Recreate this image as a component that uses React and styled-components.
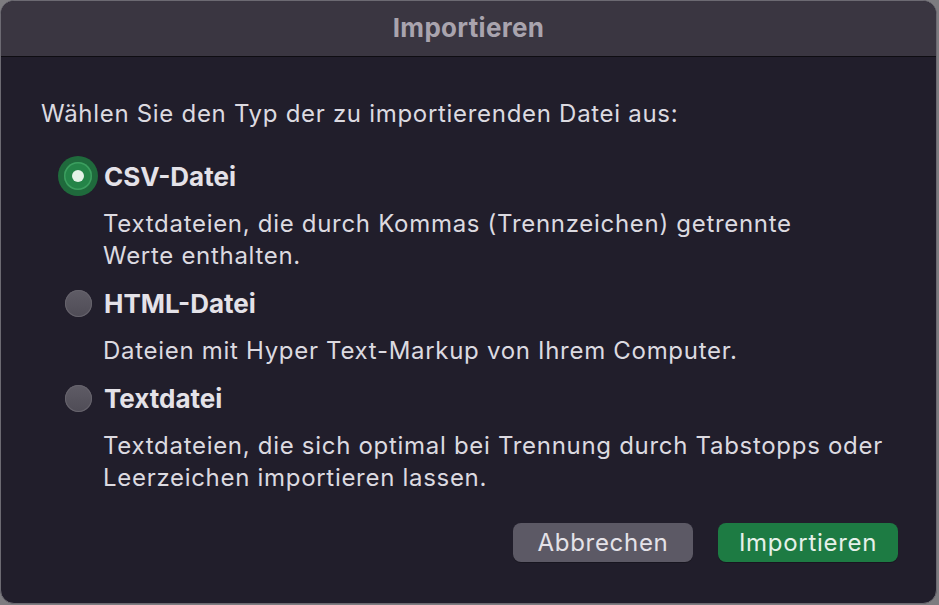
import React, { useState } from "react";
import styled, { createGlobalStyle } from "styled-components";

const GlobalStyle = createGlobalStyle`
  html, body {
    margin: 0;
    padding: 0;
    background: #7d7c80;
  }
  * {
    box-sizing: border-box;
  }
`;

const Window = styled.div`
  width: 937px;
  height: 604px;
  display: flex;
  flex-direction: column;
  background: #211e2b;
  border: 1px solid #6c6a72;
  border-radius: 14px;
  overflow: hidden;
  font-family: Inter, "Liberation Sans", sans-serif;
  color: #dcdae0;
`;

const TitleBar = styled.div`
  height: 56px;
  flex: none;
  display: flex;
  align-items: center;
  justify-content: center;
  padding-bottom: 3px;
  background: #3a3641;
  border-bottom: 1px solid #0e0d12;
  font-size: 26px;
  font-weight: 700;
  letter-spacing: 0.3px;
  color: #a9a4ae;
`;

const Body = styled.div`
  flex: 1;
  display: flex;
  flex-direction: column;
  padding: 41px 38px 0 40px;
`;

const Prompt = styled.div`
  font-size: 24px;
  letter-spacing: 0.7px;
  line-height: 32px;
  margin-bottom: 26px;
`;

const Option = styled.label`
  display: flex;
  align-items: center;
  height: 40px;
  gap: 6px;
  padding-left: 17px;
  cursor: pointer;
`;

const RadioOuter = styled.span`
  width: 40px;
  height: 40px;
  flex: none;
  display: flex;
  align-items: center;
  justify-content: center;
  border-radius: 50%;
  background: ${(p) => (p.checked ? "#1f6a3c" : "transparent")};
`;

const RadioDot = styled.span`
  width: ${(p) => (p.checked ? 28 : 27)}px;
  height: ${(p) => (p.checked ? 28 : 27)}px;
  display: flex;
  align-items: center;
  justify-content: center;
  border-radius: 50%;
  background: ${(p) =>
    p.checked
      ? "#248448"
      : "linear-gradient(#5f5c66, #4f4c56)"};
  box-shadow: ${(p) =>
    p.checked ? "inset 0 0 0 1.5px #3c9e5f" : "inset 0 0 0 1px #66636c"};

  &::after {
    content: "";
    display: ${(p) => (p.checked ? "block" : "none")};
    width: 12px;
    height: 12px;
    border-radius: 50%;
    background: #e4f2e8;
  }
`;

const OptionTitle = styled.span`
  font-size: 26px;
  font-weight: 700;
  color: #e4e2e8;
`;

const Description = styled.div`
  font-size: 24px;
  letter-spacing: 0.7px;
  line-height: 32px;
  padding-left: 62px;
  margin: 12px 0 11px;
`;

const Footer = styled.div`
  display: flex;
  justify-content: flex-end;
  gap: 25px;
  margin-top: 18px;
`;

const Button = styled.button`
  width: 180px;
  height: 39px;
  padding: 0;
  border: none;
  border-radius: 8px;
  font-family: inherit;
  font-size: 24px;
  letter-spacing: 0.7px;
  color: ${(p) => (p.primary ? "#e6f1ea" : "#e4e2e8")};
  background: ${(p) => (p.primary ? "#1d7b43" : "#5c5965")};
  box-shadow: 0 1px 0 rgba(0, 0, 0, 0.25);
  cursor: pointer;
`;

const options = [
  {
    id: "csv",
    title: "CSV-Datei",
    desc: ["Textdateien, die durch Kommas (Trennzeichen) getrennte", "Werte enthalten."],
  },
  {
    id: "html",
    title: "HTML-Datei",
    desc: ["Dateien mit Hyper Text-Markup von Ihrem Computer."],
  },
  {
    id: "txt",
    title: "Textdatei",
    desc: [
      "Textdateien, die sich optimal bei Trennung durch Tabstopps oder",
      "Leerzeichen importieren lassen.",
    ],
  },
];

export default function App() {
  const [selected, setSelected] = useState("csv");

  return (
    <>
      <GlobalStyle />
      <Window>
        <TitleBar>Importieren</TitleBar>
        <Body>
          <Prompt>Wählen Sie den Typ der zu importierenden Datei aus:</Prompt>
          {options.map((opt) => (
            <div key={opt.id}>
              <Option onClick={() => setSelected(opt.id)}>
                <RadioOuter checked={selected === opt.id}>
                  <RadioDot checked={selected === opt.id} />
                </RadioOuter>
                <OptionTitle>{opt.title}</OptionTitle>
              </Option>
              <Description>
                {opt.desc.map((line) => (
                  <div key={line}>{line}</div>
                ))}
              </Description>
            </div>
          ))}
          <Footer>
            <Button>Abbrechen</Button>
            <Button primary>Importieren</Button>
          </Footer>
        </Body>
      </Window>
    </>
  );
}
